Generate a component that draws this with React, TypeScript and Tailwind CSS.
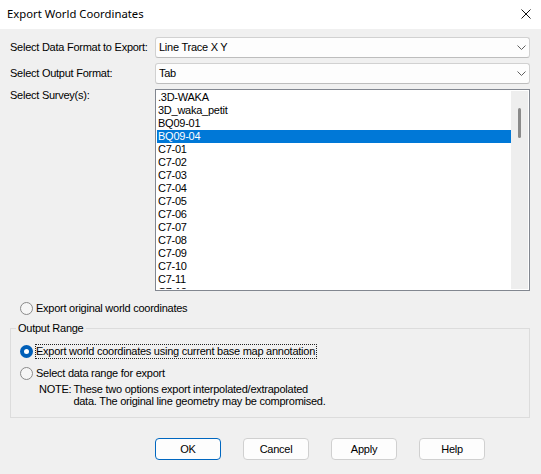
import React from 'react';

// Export World Coordinates dialog (Windows 11 look)
const surveys = [
  '.3D-WAKA', '3D_waka_petit', 'BQ09-01', 'BQ09-04',
  'C7-01', 'C7-02', 'C7-03', 'C7-04', 'C7-05', 'C7-06',
  'C7-07', 'C7-08', 'C7-09', 'C7-10', 'C7-11', 'C7-12',
];

const Combo = ({ value }: { value: string }) => (
  <div className="flex h-[21px] items-center justify-between rounded-[3px] border border-[#d1d1d1] border-b-[#bdbdbd] bg-[#fdfdfd] pl-[3px] pr-[3px]">
    <span>{value}</span>
    <svg width="9" height="5" viewBox="0 0 9 5">
      <path d="M0.5 0.5 L4.5 4.5 L8.5 0.5" fill="none" stroke="#606060" strokeWidth="1" />
    </svg>
  </div>
);

const Radio = ({ label, checked = false, focus = false }: { label: string; checked?: boolean; focus?: boolean }) => (
  <div className="flex h-[14px] items-center">
    {checked ? (
      <span className="flex h-[13px] w-[13px] items-center justify-center rounded-full bg-[#005fb8]">
        <span className="h-[5px] w-[5px] rounded-full bg-white" />
      </span>
    ) : (
      <span className="h-[13px] w-[13px] rounded-full border border-[#8a8a8a] bg-[#f6f6f6]" />
    )}
    <span
      className={`ml-[2px] border pr-[1px] leading-[13px] ${focus ? 'border-dotted border-[#222]' : 'border-transparent'}`}
    >
      {label}
    </span>
  </div>
);

const Button = ({ label, primary = false }: { label: string; primary?: boolean }) => (
  <button
    type="button"
    className={`h-[22px] w-[66px] rounded-[4px] border bg-[#fdfdfd] leading-[20px] text-black ${primary ? 'border-[#0067c0]' : 'border-[#d0d0d0]'}`}
  >
    {label}
  </button>
);

export default function App() {
  return (
    <div className="flex h-[474px] w-[541px] flex-col bg-[#f0f0f0] font-['Liberation_Sans',Arial,sans-serif] text-[11px] tracking-[-0.25px] text-black">
      {/* Title bar */}
      <div className="flex h-[29px] shrink-0 items-start justify-between bg-white">
        <span className="mt-[6px] pl-[7px] font-['Noto_Sans',sans-serif] text-[11.3px] tracking-normal">
          Export World Coordinates
        </span>
        <svg className="mr-[10px] mt-[9px]" width="10" height="10" viewBox="0 0 10 10">
          <path d="M0.5 0.5 L9.5 9.5 M9.5 0.5 L0.5 9.5" stroke="#111" strokeWidth="1" />
        </svg>
      </div>

      <div className="flex flex-col pl-[10px] pr-[11px] pt-[8px]">
        <div className="grid grid-cols-[145px_1fr] gap-y-[5px]">
          <span className="self-center">Select Data Format to Export:</span>
          <Combo value="Line Trace X Y" />

          <span className="self-center">Select Output Format:</span>
          <Combo value="Tab" />

          <span className="leading-[13px]">Select Survey(s):</span>
          {/* Survey list */}
          <div className="flex h-[202px] border border-[#828790] bg-white p-[1px]">
            <div className="flex-1 overflow-hidden">
              {surveys.map((s, i) => (
                <div
                  key={s}
                  className={`h-[13px] pl-[1px] leading-[13px] ${i === 3 ? 'bg-[#0078d7] text-white' : ''}`}
                >
                  {s}
                </div>
              ))}
            </div>
            <div className="flex w-[17px] justify-center bg-[#eeeeee] pt-[17px]">
              <div className="h-[30px] w-[3px] rounded-full bg-[#8a8a8a]" />
            </div>
          </div>
        </div>

        <div className="mt-[10px] pl-[10px]">
          <Radio label="Export original world coordinates" />
        </div>

        {/* Output range group */}
        <fieldset className="mt-[7px] border border-[#dcdcdc] pb-[10px] pl-[9px] pt-[9px]">
          <legend className="ml-[-4px] px-[2px] leading-[13px]">Output Range</legend>
          <Radio label="Export world coordinates using current base map annotation" checked focus />
          <div className="mt-[8px]">
            <Radio label="Select data range for export" />
          </div>
          <div className="ml-[19px] mt-[3px] flex gap-[2px] leading-[12px]">
            <span>NOTE:</span>
            <div>
              <div>These two options export interpolated/extrapolated</div>
              <div>data. The original line geometry may be compromised.</div>
            </div>
          </div>
        </fieldset>

        <div className="mt-[20px] flex gap-[22px] pl-[145px]">
          <Button label="OK" primary />
          <Button label="Cancel" />
          <Button label="Apply" />
          <Button label="Help" />
        </div>
      </div>
    </div>
  );
}
